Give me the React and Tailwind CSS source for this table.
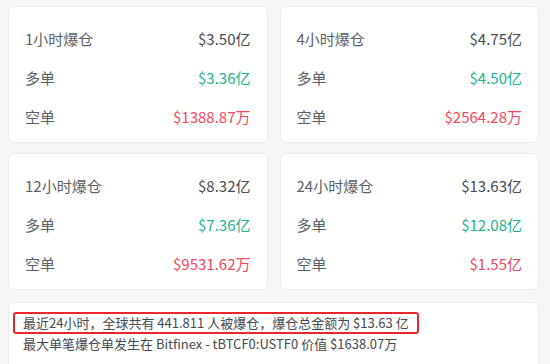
const cards = [
  { title: "1小时爆仓", total: "$3.50亿", long: "$3.36亿", short: "$1388.87万" },
  { title: "4小时爆仓", total: "$4.75亿", long: "$4.50亿", short: "$2564.28万" },
  { title: "12小时爆仓", total: "$8.32亿", long: "$7.36亿", short: "$9531.62万" },
  { title: "24小时爆仓", total: "$13.63亿", long: "$12.08亿", short: "$1.55亿" },
];

const Row = ({ label, value, color }) => (
  <div className="flex h-[39px] items-center justify-between">
    <span className="text-[#5b5f66]">{label}</span>
    <span className={color}>{value}</span>
  </div>
);

const Card = ({ card }) => (
  <div className="h-[137px] rounded-md border border-[#ebebeb] bg-white px-4 pt-[13px]">
    <Row label={card.title} value={card.total} color="text-[#474b52]" />
    <Row label="多单" value={card.long} color="text-[#22b38f]" />
    <Row label="空单" value={card.short} color="text-[#f5475c]" />
  </div>
);

export default function App() {
  return (
    <div
      className="h-[364px] w-[550px] overflow-hidden bg-[#f6f6f6] pl-2 pr-[11px] pt-[6px] text-[15px]"
      style={{ fontFamily: '"Noto Sans CJK SC", "Noto Sans", sans-serif' }}
    >
      <div className="grid grid-cols-2 gap-x-3 gap-y-[10px]">
        {cards.map((c) => (
          <Card key={c.title} card={c} />
        ))}
      </div>
      <div className="mt-3 h-[80px] rounded-md border border-[#ebebeb] bg-white px-1 pt-[9px] text-[13px] text-[#444850]">
        <div className="inline-block rounded-[3px] border-2 border-[#e8282e] px-2 leading-[18px]">
          最近24小时，全球共有 441.811 人被爆仓，爆仓总金额为 $13.63 亿
        </div>
        <div className="pl-[10px] leading-[20px]">
          最大单笔爆仓单发生在 Bitfinex - tBTCF0:USTF0 价值 $1638.07万
        </div>
      </div>
    </div>
  );
}
